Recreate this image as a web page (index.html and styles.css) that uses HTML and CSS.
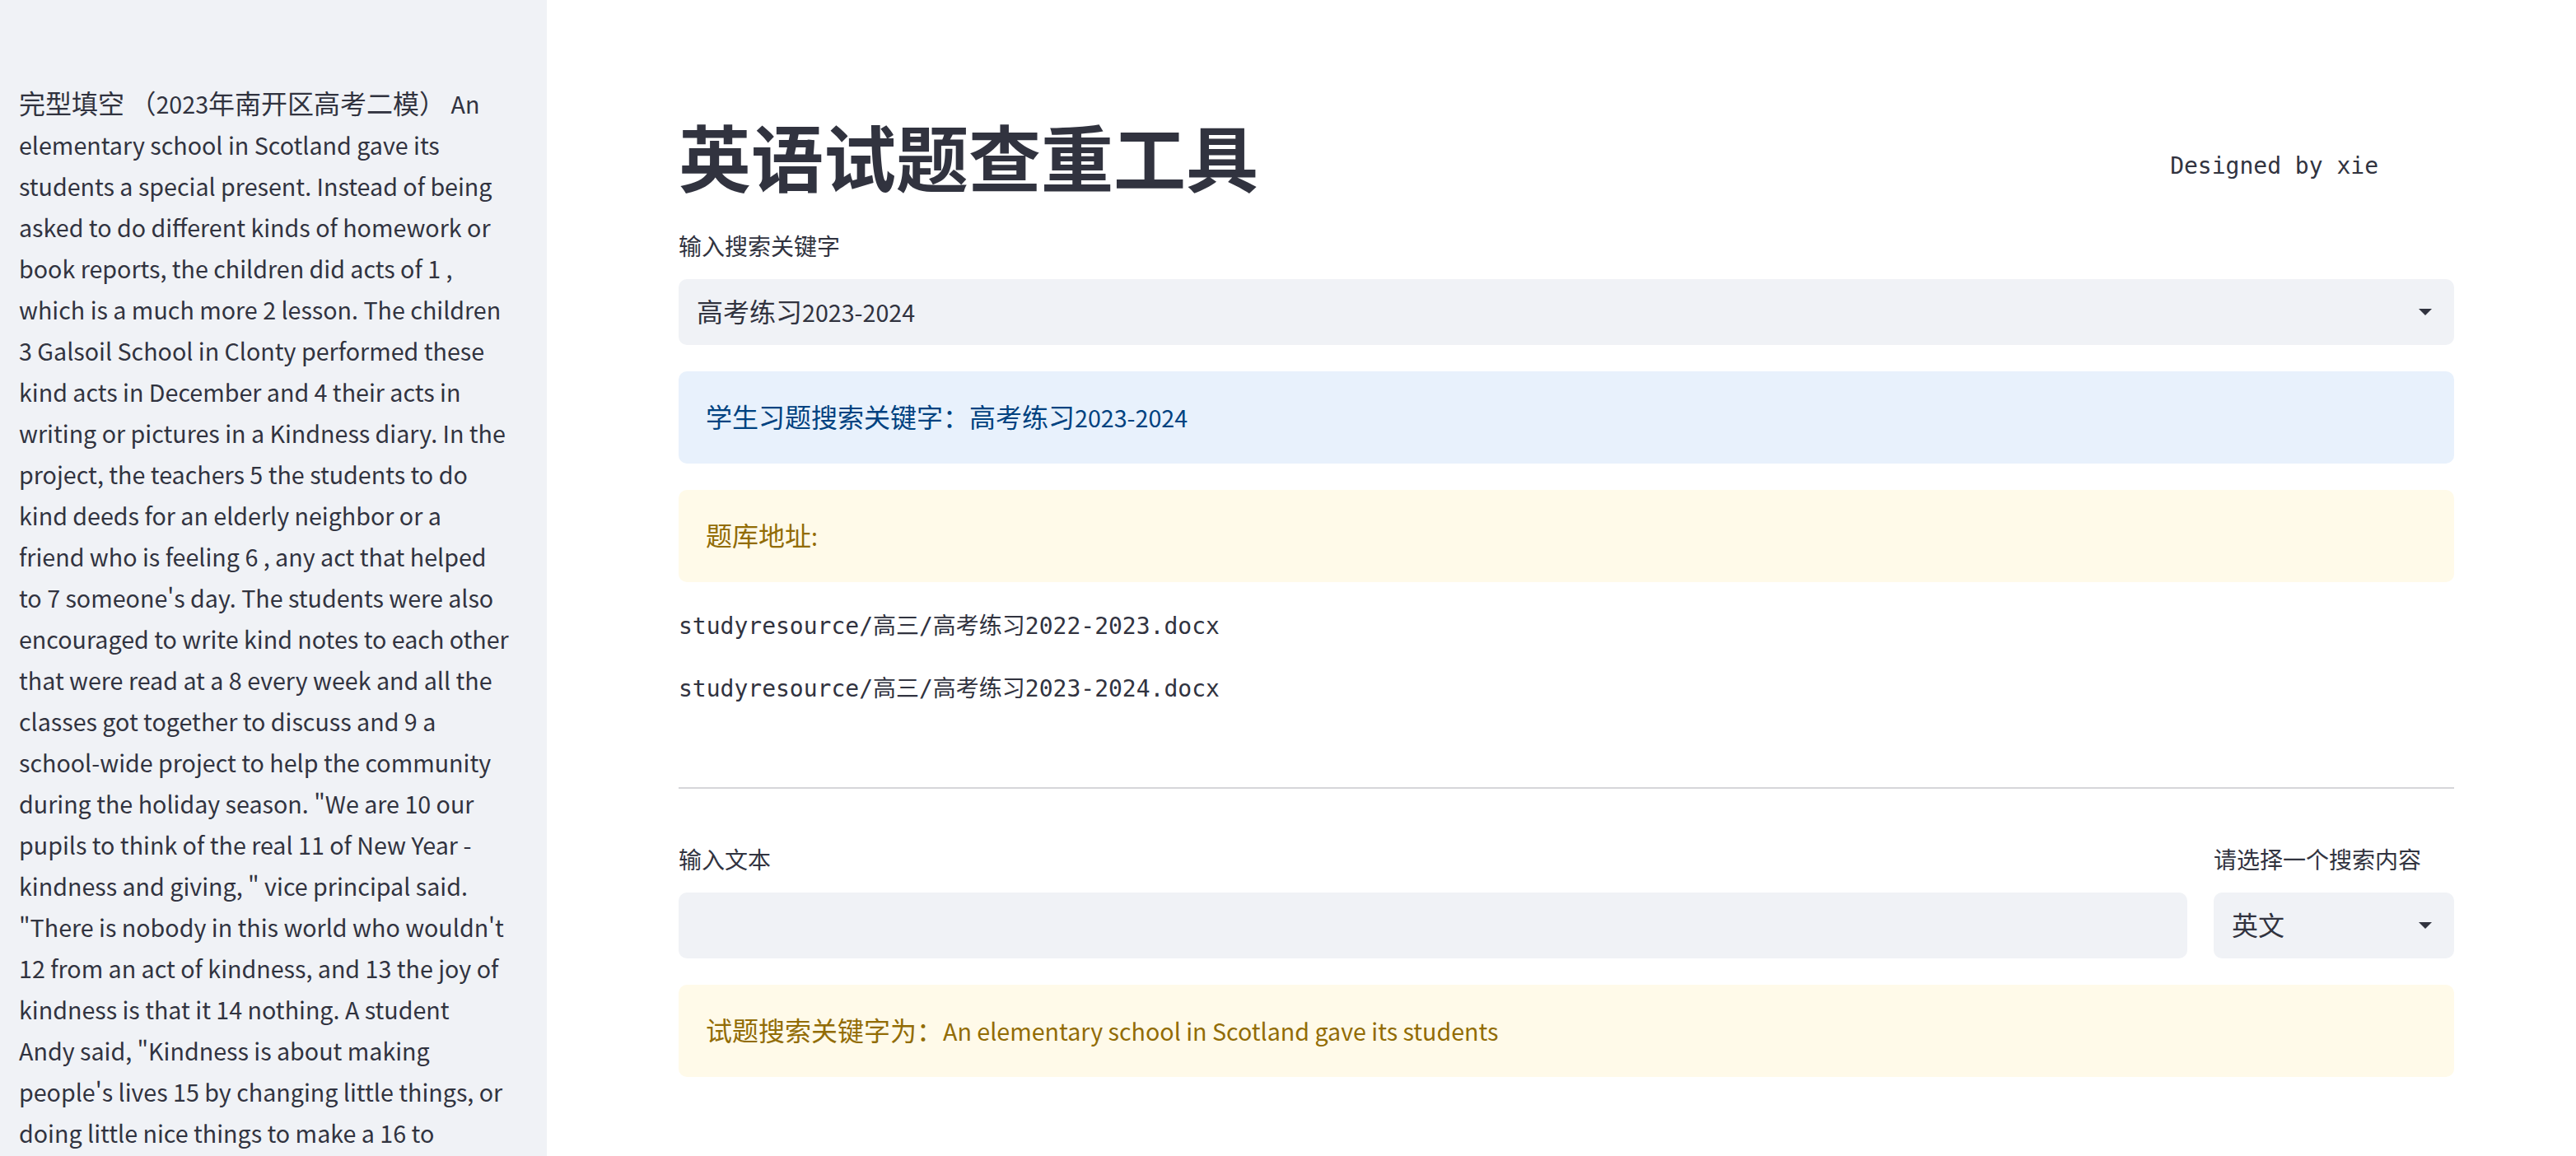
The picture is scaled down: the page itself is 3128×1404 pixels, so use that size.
FILE: index.html
```html
<!DOCTYPE html>
<html lang="zh-CN">
<head>
<meta charset="utf-8">
<title>英语试题查重工具</title>
<link rel="stylesheet" href="styles.css">
</head>
<body>
<div class="app">
  <aside class="sidebar">
    <p class="passage"><span class="zh">完型填空</span> <span class="zh">（</span>2023<span class="zh">年南开区高考二模）</span> An<br>elementary school in Scotland gave its<br>students a special present. Instead of being<br>asked to do different kinds of homework or<br>book reports, the children did acts of 1 ,<br>which is a much more 2 lesson. The children<br>3 Galsoil School in Clonty performed these<br>kind acts in December and 4 their acts in<br>writing or pictures in a Kindness diary. In the<br>project, the teachers 5 the students to do<br>kind deeds for an elderly neighbor or a<br>friend who is feeling 6 , any act that helped<br>to 7 someone's day. The students were also<br>encouraged to write kind notes to each other<br>that were read at a 8 every week and all the<br>classes got together to discuss and 9 a<br>school-wide project to help the community<br>during the holiday season. "We are 10 our<br>pupils to think of the real 11 of New Year -<br>kindness and giving, " vice principal said.<br>"There is nobody in this world who wouldn't<br>12 from an act of kindness, and 13 the joy of<br>kindness is that it 14 nothing. A student<br>Andy said, "Kindness is about making<br>people's lives 15 by changing little things, or<br>doing little nice things to make a 16 to</p>
  </aside>
  <main class="main">
    <div class="header-row">
      <h1 class="title">英语试题查重工具</h1>
      <div class="credit">Designed by xie</div>
    </div>
    <div class="field">
      <div class="label">输入搜索关键字</div>
      <div class="select">
        <span class="select-value"><span class="zh">高考练习</span>2023-2024</span>
        <svg class="caret" width="16" height="8" viewBox="0 0 16 8"><polygon points="0,0 16,0 8,8" fill="#31333f"/></svg>
      </div>
    </div>
    <div class="alert info"><span class="zh">学生习题搜索关键字：高考练习</span>2023-2024</div>
    <div class="alert warning"><span class="zh">题库地址</span>:</div>
    <div class="mono">studyresource/高三/高考练习2022-2023.docx</div>
    <div class="mono">studyresource/高三/高考练习2023-2024.docx</div>
    <div class="divider"><div class="rule"></div></div>
    <div class="row2">
      <div class="field">
        <div class="label">输入文本</div>
        <div class="text-input"></div>
      </div>
      <div class="field">
        <div class="label">请选择一个搜索内容</div>
        <div class="select">
          <span class="select-value"><span class="zh">英文</span></span>
          <svg class="caret" width="16" height="8" viewBox="0 0 16 8"><polygon points="0,0 16,0 8,8" fill="#31333f"/></svg>
        </div>
      </div>
    </div>
    <div class="alert warning"><span class="zh">试题搜索关键字为：</span>An elementary school in Scotland gave its students</div>
  </main>
</div>
</body>
</html>
```

FILE: styles.css
```css
html, body {
  margin: 0;
  padding: 0;
  background: #ffffff;
  color: #31333f;
  font-family: "Noto Sans CJK SC", "Noto Sans", sans-serif;
  height: 1404px;
  overflow: hidden;
}

.app {
  display: flex;
  height: 1404px;
  overflow: hidden;
}

.zh {
  font-size: 32px;
  line-height: 40px;
}

.sidebar {
  width: 664px;
  flex: 0 0 664px;
  background: #f0f2f6;
  box-sizing: border-box;
  padding: 101px 20px 0 23px;
  overflow: hidden;
}

.passage {
  margin: 0;
  font-size: 28.65px;
  line-height: 50px;
  white-space: nowrap;
  color: #31333f;
}

.main {
  flex: 1;
  box-sizing: border-box;
  padding: 96px 148px 0 160px;
  display: flex;
  flex-direction: column;
  gap: 32px;
  min-width: 0;
}

.header-row {
  display: flex;
  justify-content: space-between;
  align-items: flex-start;
}

.title {
  margin: 0;
  padding: 39px 0 4px 0;
  font-size: 88px;
  line-height: 106px;
  font-weight: 700;
  color: #31333f;
}

.credit {
  margin-top: 84px;
  margin-right: 92px;
  font-family: "DejaVu Sans Mono", "Liberation Mono", monospace;
  font-size: 28px;
  line-height: 44px;
  color: #31333f;
}

.field {
  display: flex;
  flex-direction: column;
}

.label {
  font-size: 28px;
  line-height: 42px;
  padding-bottom: 4px;
  margin-bottom: 16px;
  color: #31333f;
}

.select {
  height: 80px;
  background: #f0f2f6;
  border-radius: 10px;
  display: flex;
  align-items: center;
  justify-content: space-between;
  padding: 0 27px 0 22px;
  box-sizing: border-box;
}

.select-value {
  font-size: 28.65px;
  line-height: 48px;
  color: #31333f;
}

.caret {
  display: block;
}

.text-input {
  height: 80px;
  background: #f0f2f6;
  border-radius: 10px;
}

.alert {
  box-sizing: border-box;
  padding: 32px 32px 32px 33px;
  font-size: 28.65px;
  line-height: 48px;
  border-radius: 10px;
}

.info {
  background: #e8f1fc;
  color: #004280;
}

.warning {
  background: #fffae9;
  color: #926c05;
}

.mono {
  font-family: "DejaVu Sans Mono", "Liberation Mono", "Noto Sans CJK SC", monospace;
  font-size: 28px;
  line-height: 44px;
  color: #31333f;
}

.divider {
  padding: 65px 0 32px 0;
}

.rule {
  height: 2px;
  background: #d6d6d9;
}

.row2 {
  display: grid;
  grid-template-columns: 1fr 292px;
  gap: 32px;
}
```
